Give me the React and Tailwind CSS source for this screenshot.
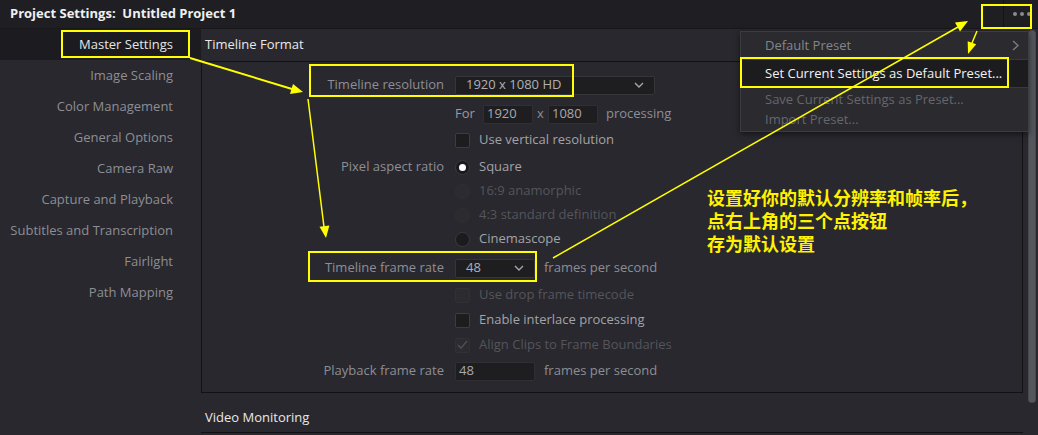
import React from 'react';

const font = { fontFamily: '"Open Sans", "Noto Sans", sans-serif' };

const sideItems = [
  'Image Scaling',
  'Color Management',
  'General Options',
  'Camera Raw',
  'Capture and Playback',
  'Subtitles and Transcription',
  'Fairlight',
  'Path Mapping',
];

const Chevron = ({ className = '' }) => (
  <svg width="10" height="6" viewBox="0 0 10 6" className={className}>
    <polyline points="1,1 5,5 9,1" fill="none" stroke="#a6a6ab" strokeWidth="1.4" />
  </svg>
);

const Check = ({ disabled, checked }) => (
  <div
    className={`w-[15px] h-[15px] rounded-[2px] border flex items-center justify-center ${
      disabled ? 'bg-[#2b2b30] border-[#303035]' : 'bg-[#1d1d20] border-[#3c3c41]'
    }`}
  >
    {checked && (
      <svg width="11" height="10" viewBox="0 0 11 10">
        <polyline points="1,5 4,8 10,1" fill="none" stroke="#4c4c52" strokeWidth="1.6" />
      </svg>
    )}
  </div>
);

const Radio = ({ disabled, checked }) => (
  <div
    className={`w-[15px] h-[15px] rounded-full border flex items-center justify-center ${
      disabled ? 'bg-[#2b2b30] border-[#2f2f34]' : 'bg-[#1b1b1e] border-[#3a3a3f]'
    }`}
  >
    {checked && <div className="w-[7px] h-[7px] rounded-full bg-white" />}
  </div>
);

const Row = ({ label, mt, children }) => (
  <div className={`flex items-center h-[24px] ${mt}`}>
    <div className="w-[242px] text-right text-[13px] text-[#8e8e94] whitespace-nowrap">{label}</div>
    <div className="ml-[11px] flex items-center gap-[9px] text-[13px] whitespace-nowrap">{children}</div>
  </div>
);

const Option = ({ text, disabled, children }) => (
  <>
    {children}
    <span className={disabled ? 'text-[#55555b]' : 'text-[#a3a3a8]'}>{text}</span>
  </>
);

const Overlay = () => (
  <svg width="1038" height="435" className="absolute left-0 top-0 pointer-events-none">
    <g fill="none" stroke="#ffff00" strokeWidth="2">
      <rect x="62" y="31" width="127" height="26" />
      <rect x="310" y="65" width="263" height="31" />
      <rect x="309" y="252" width="227" height="29" />
      <rect x="741" y="58" width="267" height="29" />
      <rect x="982" y="5" width="49" height="23" />
      <line x1="190" y1="58" x2="292" y2="89" />
      <line x1="308" y1="99" x2="324" y2="227" strokeWidth="1.5" />
      <line x1="553" y1="258" x2="958" y2="27" strokeWidth="1.5" />
      <line x1="977" y1="31" x2="972" y2="43" strokeWidth="1.5" />
    </g>
    <g fill="#ffff00">
      <polygon points="303,92 290,94 293,84" />
      <polygon points="326,238 319.5,226.7 329.4,225.5" />
      <polygon points="968,21 960,31.5 955,22.5" />
      <polygon points="968,54 976.2,44.2 967.7,41.2" />
    </g>
  </svg>
);

export default function App() {
  return (
    <div className="relative w-[1038px] h-[435px] overflow-hidden bg-[#28282e] flex flex-col" style={font}>
      {/* title bar */}
      <div className="h-[29px] flex items-center bg-[#1f1f23] border-b border-[#18181b]">
        <div className="pl-[10px] text-[13px] font-bold text-[#f0f0f0] whitespace-pre">Project Settings:  Untitled Project 1</div>
        <div className="ml-auto h-full flex items-center">
          <div className="w-px h-full bg-[#141417]" />
          <div className="w-[34px] flex items-center justify-center gap-[3px] pl-[1px]">
            <div className="w-[4px] h-[4px] rounded-full bg-[#8a8a90]" />
            <div className="w-[4px] h-[4px] rounded-full bg-[#8a8a90]" />
            <div className="w-[4px] h-[4px] rounded-full bg-[#8a8a90]" />
          </div>
        </div>
      </div>

      <div className="flex flex-1">
        {/* sidebar */}
        <div className="w-[201px] flex flex-col">
          <div className="h-[31px] flex items-center justify-end pr-[28px] bg-[#1c1c20] text-[13px] text-[#e6e6e6]">
            Master Settings
          </div>
          {sideItems.map((s) => (
            <div key={s} className="h-[31px] flex items-center justify-end pr-[28px] text-[13px] text-[#8e8e94] whitespace-nowrap">
              {s}
            </div>
          ))}
        </div>

        {/* content */}
        <div className="flex-1 flex">
          <div className="flex-1 flex flex-col">
            <div className="h-[32px] flex items-center pl-[4px] text-[13px] text-[#e8e8e8]">Timeline Format</div>
            <div className="h-[332px] border border-[#111113] flex flex-col pt-[11px]">
              <Row label="Timeline resolution">
                <div className="w-[200px] h-[19px] bg-[#1e1e21] border border-[#35353a] rounded-[2px] flex items-center pl-[10px] pr-[10px] text-[#b0b0b4]">
                  <span>1920 x 1080 HD</span>
                  <Chevron className="ml-auto" />
                </div>
              </Row>
              <Row label="" mt="mt-[5px]">
                <div className="flex items-center">
                  <span className="w-[28px] text-[#9a9aa0]">For</span>
                  <div className="w-[50px] h-[19px] bg-[#1e1e21] border border-[#2f2f34] rounded-[2px] pl-[3px] flex items-center text-[#a8a8ad]">1920</div>
                  <span className="w-[15px] text-center text-[#8e8e94]">x</span>
                  <div className="w-[50px] h-[19px] bg-[#1e1e21] border border-[#2f2f34] rounded-[2px] pl-[3px] flex items-center text-[#a8a8ad]">1080</div>
                  <span className="ml-[8px] text-[#8e8e94]">processing</span>
                </div>
              </Row>
              <Row label="" mt="mt-[2px]">
                <Option text="Use vertical resolution"><Check /></Option>
              </Row>
              <Row label="Pixel aspect ratio" mt="mt-[3px]">
                <Option text="Square"><Radio checked /></Option>
              </Row>
              <Row label="">
                <Option text="16:9 anamorphic" disabled><Radio disabled /></Option>
              </Row>
              <Row label="">
                <Option text="4:3 standard definition" disabled><Radio disabled /></Option>
              </Row>
              <Row label="">
                <Option text="Cinemascope"><Radio /></Option>
              </Row>
              <Row label="Timeline frame rate" mt="mt-[5px]">
                <div className="w-[80px] h-[19px] bg-[#1e1e21] border border-[#35353a] rounded-[2px] flex items-center pl-[10px] pr-[10px] text-[#b0b0b4]">
                  <span>48</span>
                  <Chevron className="ml-auto" />
                </div>
                <span className="text-[#8e8e94]">frames per second</span>
              </Row>
              <Row label="" mt="mt-[3px]">
                <Option text="Use drop frame timecode" disabled><Check disabled /></Option>
              </Row>
              <Row label="" mt="mt-[1px]">
                <Option text="Enable interlace processing"><Check /></Option>
              </Row>
              <Row label="" mt="mt-[1px]">
                <Option text="Align Clips to Frame Boundaries" disabled><Check disabled checked /></Option>
              </Row>
              <Row label="Playback frame rate" mt="mt-[2px]">
                <div className="w-[80px] h-[19px] bg-[#1e1e21] border border-[#2f2f34] rounded-[2px] pl-[3px] flex items-center text-[#a8a8ad]">48</div>
                <span className="text-[#8e8e94]">frames per second</span>
              </Row>
            </div>
            <div className="h-[40px] flex items-center pt-[11px] pl-[4px] text-[13px] text-[#e8e8e8] border-b border-[#111113]">
              Video Monitoring
            </div>
          </div>
          {/* scrollbar */}
          <div className="w-[15px] flex flex-col">
            <div className="ml-[5px] w-[8px] h-[373px] mt-[1px] rounded-[3px] bg-[#55575e] border border-[#46484e]" />
          </div>
        </div>
      </div>

      {/* menu */}
      <div className="absolute left-[740px] top-[31px] w-[289px] h-[101px] bg-[#2a2a2f] border border-[#3b3b40] shadow-[0_2px_6px_rgba(0,0,0,0.5)] flex flex-col text-[13px]">
        <div className="h-[27px] flex items-center pl-[24px] pr-[9px] text-[#85858b]">
          <span>Default Preset</span>
          <svg width="7" height="11" viewBox="0 0 7 11" className="ml-auto">
            <polyline points="1,1 6,5.5 1,10" fill="none" stroke="#7c7c82" strokeWidth="1.4" />
          </svg>
        </div>
        <div className="h-px bg-[#38383d] ml-[4px]" />
        <div className="h-[27px] flex items-center pl-[24px] bg-[#1c1c1f] text-[#f2f2f2]">Set Current Settings as Default Preset...</div>
        <div className="h-px bg-[#38383d] ml-[4px]" />
        <div className="mt-[2px] h-[20px] flex items-center pl-[24px] text-[#66666c]">Save Current Settings as Preset...</div>
        <div className="h-[19px] flex items-center pl-[24px] text-[#66666c]">Import Preset...</div>
      </div>

      {/* annotation text */}
      <div
        className="absolute left-[707px] top-[186px] text-[18px] font-bold text-[#fff200] whitespace-nowrap flex flex-col"
        style={{ fontFamily: '"Noto Sans CJK SC", sans-serif' }}
      >
        <div className="h-[23px] leading-[23px]">设置好你的默认分辨率和帧率后，</div>
        <div className="h-[23px] leading-[23px]">点右上角的三个点按钮</div>
        <div className="h-[23px] leading-[23px]">存为默认设置</div>
      </div>

      <Overlay />
    </div>
  );
}
